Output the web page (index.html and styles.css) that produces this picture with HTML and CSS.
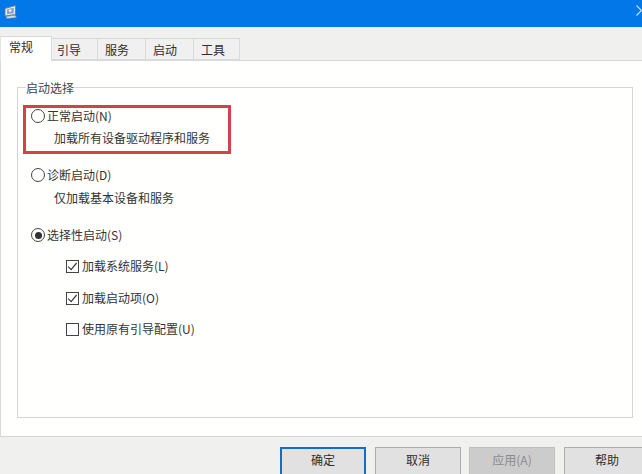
FILE: index.html
```html
<!DOCTYPE html>
<html lang="zh-CN">
<head>
<meta charset="utf-8">
<title>系统配置</title>
<link rel="stylesheet" href="styles.css">
</head>
<body>
<div class="window">
  <header class="titlebar">
    <svg class="app-icon" width="13" height="14" viewBox="0 0 13 14">
      <path d="M1 3.5L11.5 .5V9.5L1 11z" fill="#e8edf3" stroke="#6d7a8a" stroke-width=".9"/>
      <path d="M3 4.6L9.8 2.7V8.2L3 9.2z" fill="#7fa6d6"/>
      <circle cx="6.2" cy="5.6" r="1.8" fill="#f2e6ea" stroke="#8f7f90" stroke-width=".5"/>
      <path d="M2 11.4L11 10.2L12.5 12.6L3 13.6z" fill="#d5dce5" stroke="#7d8997" stroke-width=".5"/>
    </svg>
    <svg class="close-icon" width="6" height="11" viewBox="0 0 6 11">
      <path d="M0.5 0.5L5.5 5.5L0.5 10.5" fill="none" stroke="#cfe6ff" stroke-width="1.1"/>
    </svg>
  </header>
  <nav class="tabs">
    <div class="tab tab-active">常规</div>
    <div class="tab tab-second">引导</div>
    <div class="tab">服务</div>
    <div class="tab">启动</div>
    <div class="tab tab-end">工具</div>
  </nav>
  <main class="panel">
    <fieldset class="group">
      <legend class="legend">启动选择</legend>
      <div class="highlight">
        <div class="option"><span class="radio"></span>正常启动(N)</div>
        <div class="desc desc-first">加载所有设备驱动程序和服务</div>
      </div>
      <div class="option option-diag"><span class="radio"></span>诊断启动(D)</div>
      <div class="desc desc-diag">仅加载基本设备和服务</div>
      <div class="option option-sel"><span class="radio radio-on"></span>选择性启动(S)</div>
      <div class="check check-a"><span class="box"><svg width="13" height="13" viewBox="0 0 13 13"><path d="M2.2 6.6L5.1 9.6L10.6 3" fill="none" stroke="#3a3a3a" stroke-width="1.2"/></svg></span>加载系统服务(L)</div>
      <div class="check check-b"><span class="box"><svg width="13" height="13" viewBox="0 0 13 13"><path d="M2.2 6.6L5.1 9.6L10.6 3" fill="none" stroke="#3a3a3a" stroke-width="1.2"/></svg></span>加载启动项(O)</div>
      <div class="check check-a"><span class="box"></span>使用原有引导配置(U)</div>
    </fieldset>
  </main>
  <footer class="footer">
    <button class="btn btn-default">确定</button>
    <button class="btn">取消</button>
    <button class="btn btn-disabled">应用(A)</button>
    <button class="btn btn-last">帮助</button>
  </footer>
</div>
</body>
</html>
```
FILE: styles.css
```css
* { box-sizing: border-box; }
html, body { margin: 0; padding: 0; }
body {
  width: 642px;
  height: 474px;
  overflow: hidden;
  font-family: "Noto Sans CJK SC", "Liberation Sans", sans-serif;
  font-size: 12px;
  color: #333;
  background: #f0f0ee;
}
.window { display: flex; flex-direction: column; height: 474px; }
.titlebar {
  height: 27px;
  flex: none;
  background: #0278e8;
  display: flex;
  align-items: flex-start;
  justify-content: space-between;
  padding: 5px 0 0 4px;
}
.tabs {
  height: 33px;
  flex: none;
  display: flex;
  align-items: flex-end;
  background: #f0f0ee;
  border-top: 1px solid #e3e6e8;
}
.tab {
  width: 48px;
  height: 22px;
  line-height: 21px;
  padding-left: 7px;
  background: #f0f0f0;
  border: 1px solid #d9d9d9;
  border-left: 0;
  color: #2e2e2e;
}
.tab-second { margin-left: -2px; }
.tab-end { width: 46px; }
.tab-active {
  width: 52px;
  height: 25px;
  line-height: 20px;
  padding-left: 8px;
  background: #fffffe;
  border: 1px solid #d9d9d9;
  border-left-color: #e4e4e4;
  border-bottom: 0;
  margin-bottom: -1px;
  position: relative;
  z-index: 1;
}
.panel {
  flex: 1;
  min-height: 0;
  display: flex;
  flex-direction: column;
  background: #fffffe;
  border-left: 1px solid #d9d9d9;
  border-top: 1px solid #d9d9d9;
  border-bottom: 1px solid #d4d4d4;
  padding: 18px 9px 18px 16px;
}
.group {
  flex: 1;
  min-width: 0;
  margin: 0;
  padding: 10px 0 0 5px;
  border: 1px solid #d6d6d6;
}
.legend {
  padding: 0;
  margin: 0 0 0 3px;
  line-height: 17px;
  color: #444;
}
.highlight {
  width: 208px;
  height: 49px;
  margin-top: -1px;
  border: 3px solid #d0434a;
  padding-left: 5px;
}
.option, .check {
  display: flex;
  align-items: center;
  height: 16px;
  line-height: 16px;
  white-space: nowrap;
}
.radio {
  width: 14px;
  height: 14px;
  margin-right: 2px;
  border: 1px solid #444;
  border-radius: 50%;
  background: #fff;
  display: flex;
  align-items: center;
  justify-content: center;
  flex: none;
}
.radio-on::after {
  content: "";
  width: 7px;
  height: 7px;
  border-radius: 50%;
  background: #333;
}
.desc { height: 16px; line-height: 16px; margin-left: 31px; }
.desc-first { margin-top: 6px; margin-left: 23px; }
.option { margin-left: 8px; }
.highlight .option { margin-left: 0; }
.option-diag { margin-top: 13px; }
.desc-diag { margin-top: 7px; }
.option-sel { margin-top: 21px; }
.check { margin-left: 43px; }
.check-a { margin-top: 15px; }
.check-b { margin-top: 16px; }
.box {
  width: 13px;
  height: 13px;
  margin-right: 3px;
  border: 1px solid #444;
  background: #fff;
  flex: none;
}
.box svg { display: block; margin: -1px; }
.footer {
  height: 37px;
  flex: none;
  display: flex;
  padding: 10px 0 0 280px;
  gap: 8px;
  overflow: hidden;
}
.btn {
  width: 86px;
  height: 32px;
  flex: none;
  padding: 0 0 7px;
  font: inherit;
  color: #2e2e2e;
  background: #e1e1e1;
  border: 1px solid #adadad;
}
.btn-default { border: 2px solid #0d6fc8; margin-right: 1px; }
.btn-disabled { background: #cccccc; border-color: #bfbfbf; color: #8a8a8a; }
.btn-last { margin-left: 1px; }
```
